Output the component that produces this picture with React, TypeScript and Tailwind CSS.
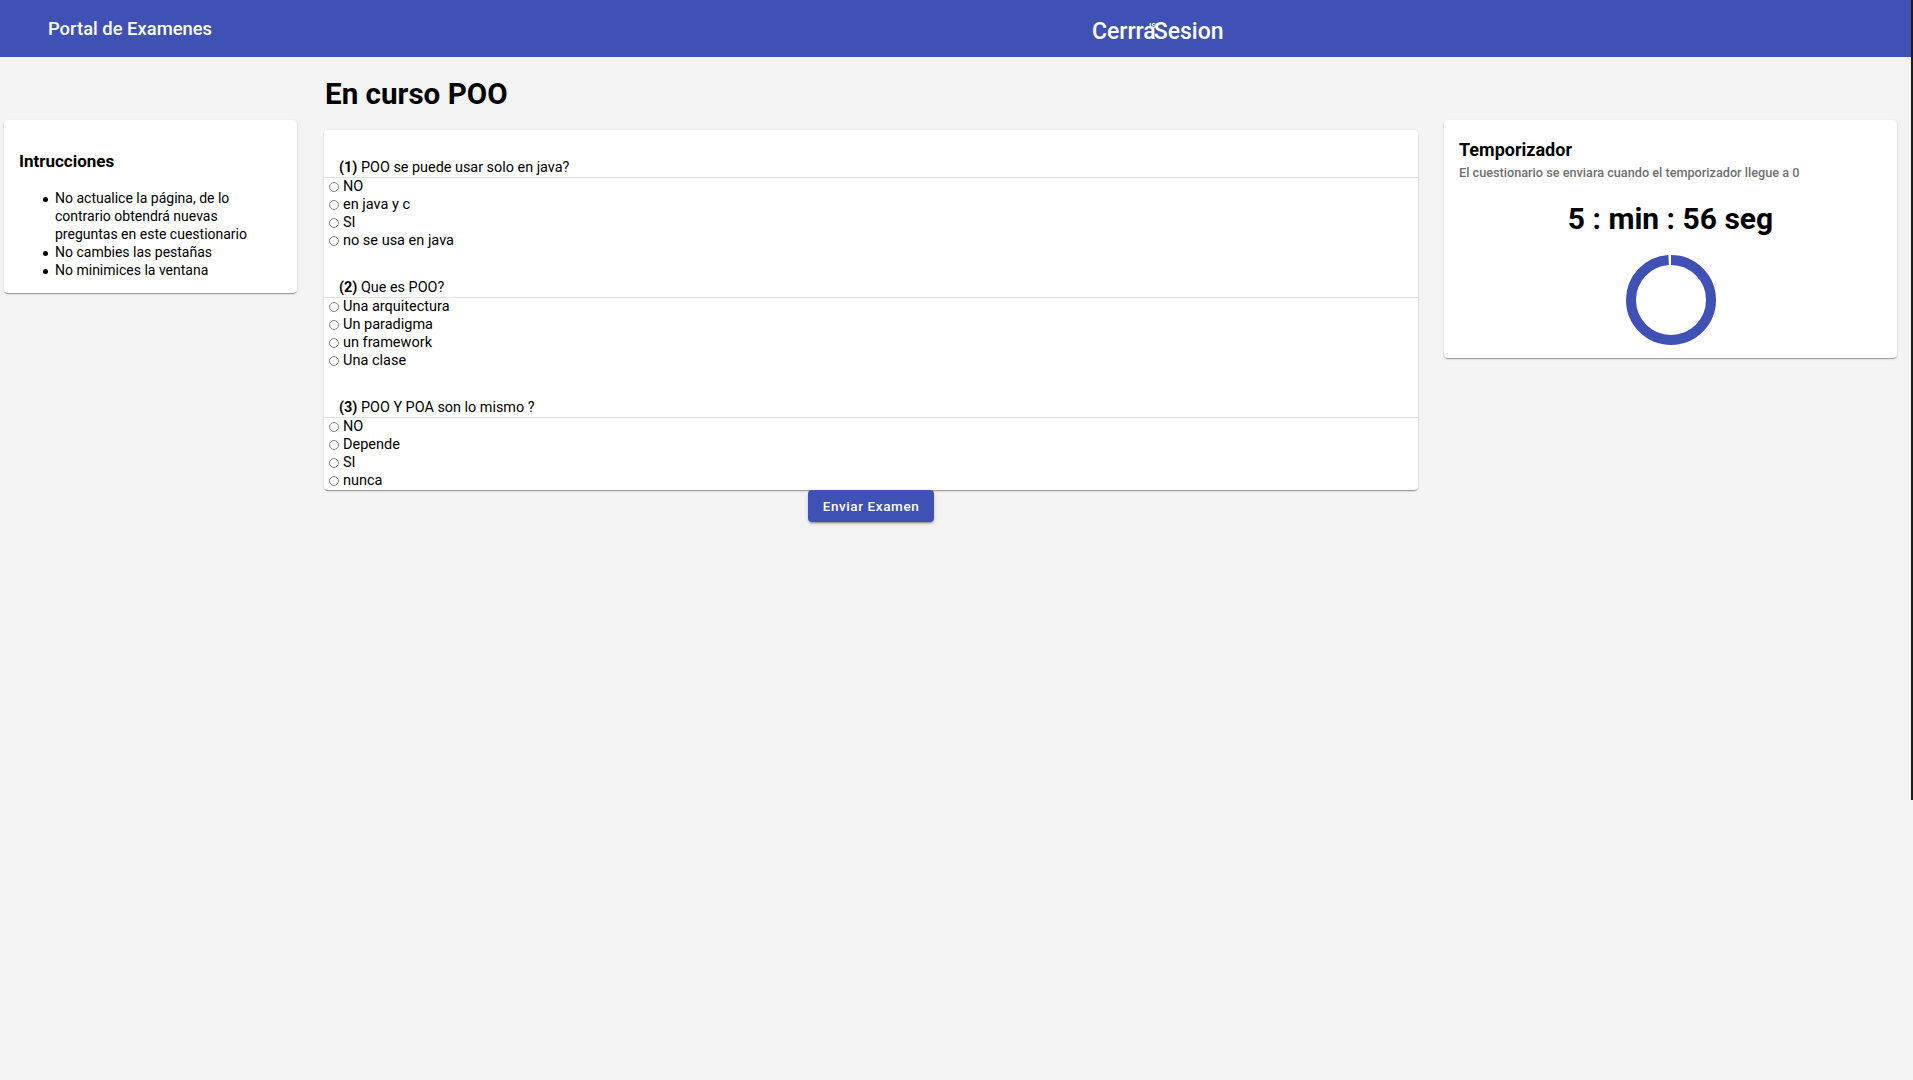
const cardShadow =
  "shadow-[0_2px_1px_-1px_rgba(0,0,0,0.2),0_1px_1px_0_rgba(0,0,0,0.14),0_1px_3px_0_rgba(0,0,0,0.12)]"

type Pregunta = {
  n: number,
  texto: string,
  opciones: string[],
}

const preguntas: Pregunta[] = [
  { n: 1, texto: "POO se puede usar solo en java?", opciones: ["NO", "en java y c", "SI", "no se usa en java"] },
  { n: 2, texto: "Que es POO?", opciones: ["Una arquitectura", "Un paradigma", "un framework", "Una clase"] },
  { n: 3, texto: "POO Y POA son lo mismo ?", opciones: ["NO", "Depende", "SI", "nunca"] },
]

const instrucciones = [
  "No actualice la página, de lo contrario obtendrá nuevas preguntas en este cuestionario",
  "No cambies las pestañas",
  "No minimices la ventana",
]

const Radio = () => (
  <span className="inline-block w-[10px] h-[10px] rounded-full border border-[#858585] bg-white mr-[4px] shrink-0" />
)

const Timer = () => {
  const r = 40
  const c = 2 * Math.PI * r
  const filled = c * (356 / 360)
  return (
    <svg width="90" height="90" viewBox="0 0 90 90" className="mx-auto">
      <circle
        cx="45"
        cy="45"
        r={r}
        fill="none"
        stroke="#3f51b5"
        strokeWidth="10"
        strokeDasharray={`${filled} ${c}`}
        transform="rotate(-90 45 45)"
      />
    </svg>
  )
}

export default function App() {
  return (
    <div className="relative min-h-[1080px] bg-[#f4f4f4] font-['Roboto','Liberation_Sans',sans-serif] text-black">
      <header className="h-[57px] bg-[#3f51b5] text-white grid grid-cols-[1092px_1fr] items-center">
        <div className="pl-[48px] text-[18.4px] font-medium leading-[24px]">Portal de Examenes</div>
        <div className="mt-[6px] text-[23px] font-medium leading-[28px]">
          <span className="relative">
            Cerrra<span className="ml-[-2px]">Sesion</span>
            <span className="absolute left-[57px] top-[2px] text-[9px] leading-[10px]">ıs</span>
          </span>
        </div>
      </header>

      <div className="flex items-start">
        {/* instrucciones */}
        <aside className={`ml-[4px] mt-[63px] w-[293px] bg-white rounded-[4px] pt-[31px] px-[15px] pb-[14px] ${cardShadow}`}>
          <h2 className="text-[17px] font-bold leading-[20px]">Intrucciones</h2>
          <ul className="mt-[18px] pl-[24px] text-[14px] leading-[18px]">
            {instrucciones.map((t) => (
              <li key={t} className="flex">
                <span className="w-[12px] shrink-0 pt-[8px]">
                  <span className="block w-[5px] h-[5px] rounded-full bg-black" />
                </span>
                <span>{t}</span>
              </li>
            ))}
          </ul>
        </aside>

        {/* examen */}
        <main className="ml-[27px] w-[1094px] flex flex-col">
          <h1 className="mt-[19px] pl-[1px] text-[29.6px] font-bold leading-[36px]">En curso POO</h1>
          <div className={`mt-[18px] bg-white rounded-[4px] ${cardShadow}`}>
            {preguntas.map((p) => (
              <section key={p.n}>
                <div className="pt-[29px] pl-[15px] text-[14.4px] leading-[18px] border-b border-[#e2e2e2]">
                  <b>({p.n})</b> {p.texto}
                </div>
                <div className="pl-[5px] text-[14.5px] leading-[18px]">
                  {p.opciones.map((o) => (
                    <div key={o} className="flex items-center h-[18px]">
                      <Radio />
                      <span>{o}</span>
                    </div>
                  ))}
                </div>
              </section>
            ))}
          </div>
          <div className="flex justify-center">
            <button className="h-[32px] w-[126px] bg-[#3f51b5] text-white rounded-[4px] text-[13.5px] font-medium tracking-[0.6px] shadow-[0_3px_1px_-2px_rgba(0,0,0,0.2),0_2px_2px_0_rgba(0,0,0,0.14),0_1px_5px_0_rgba(0,0,0,0.12)]">
              Enviar Examen
            </button>
          </div>
        </main>

        {/* temporizador */}
        <aside className={`ml-[26px] mt-[63px] w-[453px] bg-white rounded-[4px] pt-[18px] px-[15px] pb-[13px] ${cardShadow}`}>
          <h2 className="text-[18px] font-bold leading-[24px]">Temporizador</h2>
          <p className="mt-[3px] text-[12.7px] font-medium leading-[16px] text-[#707070]">
            El cuestionario se enviara cuando el temporizador llegue a 0
          </p>
          <div className="mt-[20px] text-center text-[30px] font-bold leading-[36px]">5 : min : 56 seg</div>
          <div className="mt-[18px]">
            <Timer />
          </div>
        </aside>
      </div>

      <div className="absolute right-0 top-0 w-[2px] h-[800px] bg-[#1c1c1c]" />
    </div>
  )
}
